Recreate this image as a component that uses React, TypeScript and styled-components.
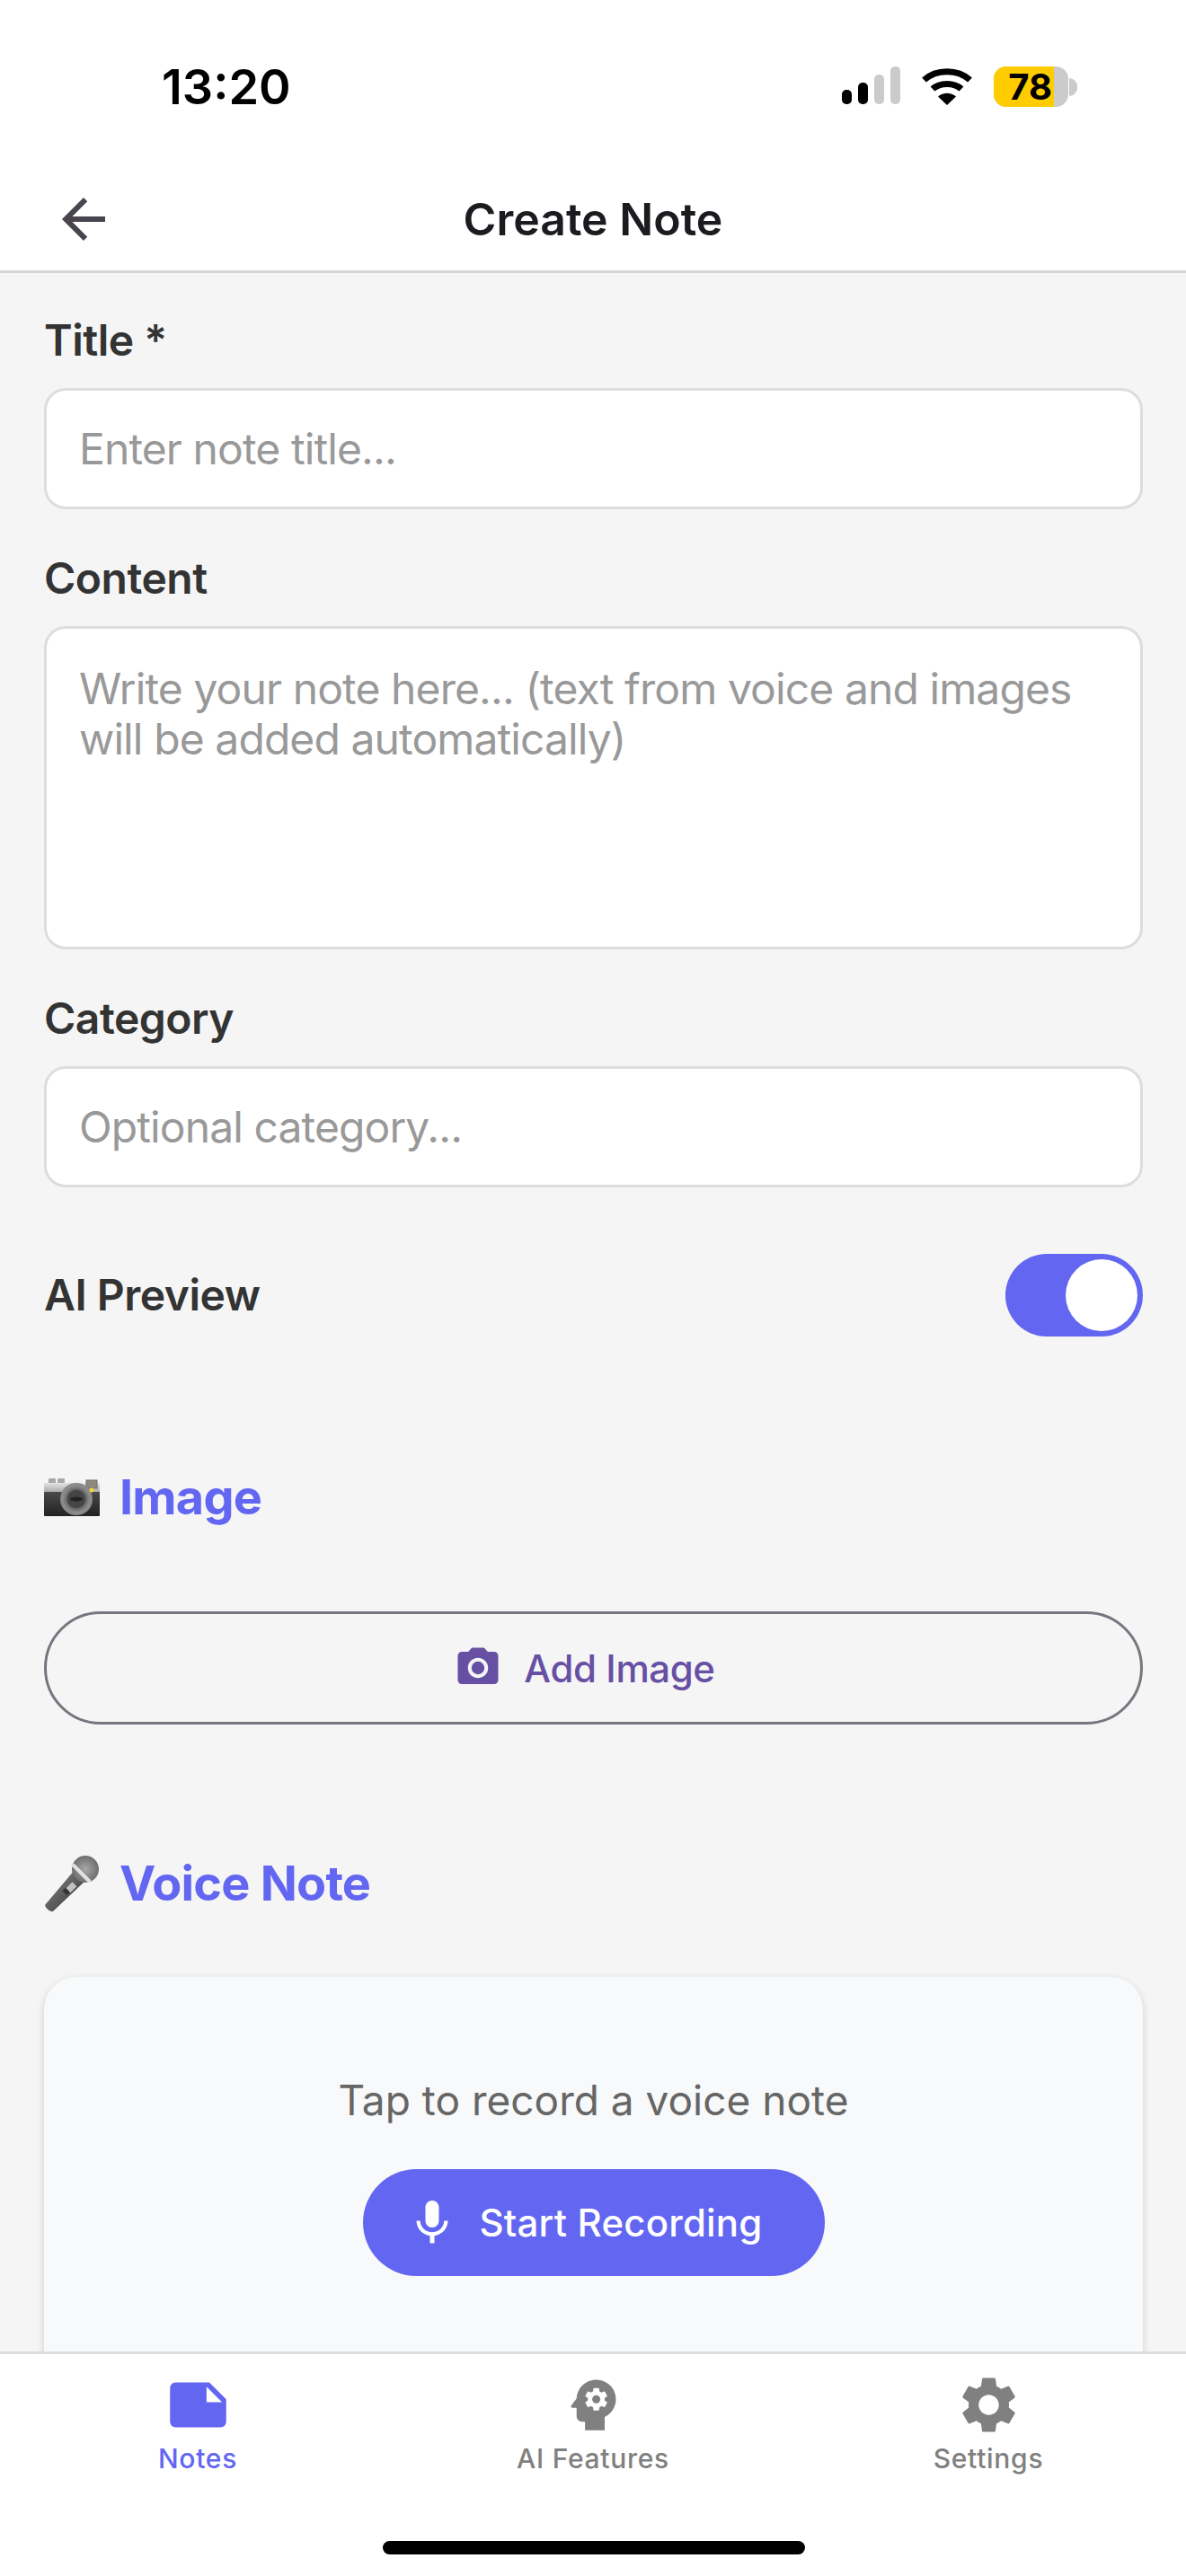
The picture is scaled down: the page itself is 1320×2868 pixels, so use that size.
import * as React from "react";
import styled, { createGlobalStyle } from "styled-components";
import { MdArrowBack, MdCameraAlt, MdMic, MdNote, MdPsychology, MdSettings } from "react-icons/md";

const GlobalStyle = createGlobalStyle`
  html, body { margin: 0; padding: 0; background: #fff; }
  * { box-sizing: border-box; }
  body { font-family: Inter, "Noto Sans", sans-serif; }
`;

const ACCENT = "#6366f1";

const Screen = styled.div`
  width: 1320px;
  height: 2868px;
  display: flex;
  flex-direction: column;
  overflow: hidden;
  background: #f5f5f5;
`;

const TopBar = styled.header`
  height: 304px;
  flex: none;
  display: flex;
  flex-direction: column;
  background: #fff;
  border-bottom: 3px solid #d4d4d6;
`;

const StatusBar = styled.div`
  height: 186px;
  flex: none;
  display: flex;
  align-items: flex-start;
  justify-content: space-between;
  padding: 64px 121px 0 180px;
`;

const Clock = styled.div`
  font-size: 54px;
  line-height: 66px;
  font-weight: 600;
  color: #000;
`;

const StatusIcons = styled.div`
  display: flex;
  align-items: flex-start;
  margin-top: 10px;
`;

const Battery = styled.div`
  display: flex;
  align-items: center;
  margin-left: 23px;
`;

const BatteryBody = styled.div`
  width: 83px;
  height: 45px;
  display: flex;
  border-radius: 14px;
  background: #cbcbcb;
`;

const BatteryFill = styled.div<{ $width: number }>`
  width: ${(p) => p.$width}px;
  display: flex;
  align-items: center;
  justify-content: flex-end;
  padding-right: 2px;
  border-radius: 14px 0 0 14px;
  background: #ffcc00;
  font-size: 40px;
  line-height: 45px;
  font-weight: 700;
  color: #000;
`;

const BatteryNub = styled.div`
  width: 9px;
  height: 20px;
  margin-left: 1px;
  border-radius: 0 10px 10px 0;
  background: #cbcbcb;
`;

const NavBar = styled.div`
  flex: 1;
  display: grid;
  grid-template-columns: 1fr auto 1fr;
  align-items: center;
  padding: 0 0 0 57px;
`;

const BackButton = styled.button`
  width: 72px;
  height: 72px;
  padding: 0;
  display: flex;
  align-items: center;
  border: 0;
  background: none;
  color: #49454f;
`;

const NavTitle = styled.h1`
  margin: 0 0 0 -57px;
  font-size: 50px;
  font-weight: 600;
  color: #1c1b1f;
  text-align: center;
`;

const Content = styled.main`
  flex: 1;
  min-height: 0;
  overflow: hidden;
  padding: 46px 48px 0 49px;
`;

const Field = styled.div`
  margin-bottom: 48px;
`;

const Label = styled.div`
  margin-bottom: 24px;
  font-size: 48px;
  line-height: 58px;
  font-weight: 600;
  letter-spacing: -0.5px;
  color: #333;
`;

const TextInput = styled.div<{ $multiline?: boolean }>`
  height: ${(p) => (p.$multiline ? 360 : 135)}px;
  padding: ${(p) => (p.$multiline ? "39px" : "0")} 36px 0;
  display: flex;
  align-items: ${(p) => (p.$multiline ? "flex-start" : "center")};
  border: 3px solid #ddd;
  border-radius: 24px;
  background: #fff;
  font-size: 48px;
  line-height: 56px;
  letter-spacing: -0.9px;
  color: #999;
`;

const SwitchRow = styled.div`
  display: flex;
  align-items: center;
  justify-content: space-between;
  margin-top: 74px;
`;

const SwitchLabel = styled(Label)`
  margin: 0;
`;

const Switch = styled.div`
  width: 153px;
  height: 92px;
  padding: 6px;
  display: flex;
  justify-content: flex-end;
  border-radius: 46px;
  background: ${ACCENT};
`;

const SwitchKnob = styled.div`
  width: 80px;
  height: 80px;
  border-radius: 50%;
  background: #fff;
`;

const SectionTitle = styled.h2<{ $top: number }>`
  margin: ${(p) => p.$top}px 0 0;
  display: flex;
  align-items: center;
  gap: 22px;
  font-size: 54px;
  line-height: 72px;
  font-weight: 700;
  letter-spacing: -0.8px;
  color: ${ACCENT};
`;

const OutlineButton = styled.button`
  width: 100%;
  height: 126px;
  margin-top: 91px;
  padding: 0 20px 0 0;
  display: flex;
  align-items: center;
  justify-content: center;
  gap: 24px;
  border: 3px solid #79747e;
  border-radius: 63px;
  background: none;
  font-family: inherit;
  font-size: 42px;
  font-weight: 500;
  letter-spacing: -0.4px;
  color: #6750a4;
`;

const RecorderCard = styled.section`
  height: 500px;
  margin-top: 68px;
  padding-top: 108px;
  display: flex;
  flex-direction: column;
  align-items: center;
  border-radius: 36px;
  background: #f8f9fa;
  box-shadow: 0 3px 9px rgba(0, 0, 0, 0.16);
`;

const RecorderHint = styled.p`
  margin: 0;
  font-size: 46px;
  line-height: 58px;
  color: #666;
`;

const RecordButton = styled.button`
  width: 514px;
  height: 119px;
  margin-top: 48px;
  padding: 0 21px 0 0;
  display: flex;
  align-items: center;
  justify-content: center;
  gap: 22px;
  border: 0;
  border-radius: 60px;
  background: ${ACCENT};
  font-family: inherit;
  font-size: 42px;
  font-weight: 500;
  letter-spacing: 0.2px;
  color: #fff;
`;

const TabBar = styled.nav`
  height: 250px;
  flex: none;
  position: relative;
  display: flex;
  align-items: flex-start;
  justify-content: space-around;
  padding: 19px 0 0;
  background: #fff;
  border-top: 3px solid #ddd;
`;

const Tab = styled.div<{ $active?: boolean }>`
  width: 440px;
  height: 130px;
  display: flex;
  flex-direction: column;
  align-items: center;
  color: ${(p) => (p.$active ? ACCENT : "#808080")};
`;

const TabLabel = styled.span`
  margin-top: 2px;
  font-size: 30px;
  line-height: 40px;
  font-weight: 500;
  letter-spacing: 0.7px;
`;

const HomeIndicator = styled.div`
  position: absolute;
  left: 426px;
  bottom: 24px;
  width: 470px;
  height: 15px;
  border-radius: 8px;
  background: #000;
`;

const SignalIcon = () => (
  <svg width="66" height="42" viewBox="0 0 66 42">
    <rect x="0" y="26" width="11" height="16" rx="5" fill="#000" />
    <rect x="18" y="18" width="11" height="24" rx="5" fill="#000" />
    <rect x="36" y="9" width="11" height="33" rx="5" fill="#cbcbcb" />
    <rect x="54" y="0" width="11" height="42" rx="5" fill="#cbcbcb" />
  </svg>
);

const WifiIcon = () => (
  <svg width="58" height="43" viewBox="0 0 58 43" style={{ marginLeft: 22 }}>
    <path d="M3.5 15C17 2.5 41 2.5 54.5 15" fill="none" stroke="#000" strokeWidth="7" />
    <path d="M13 25C21 17.500 37 17.500 45 25" fill="none" stroke="#000" strokeWidth="7" />
    <path d="M19 33.500C25 28.500 33 28.500 39 33.500L29 43Z" fill="#000" />
  </svg>
);

const CameraEmoji = () => (
  <svg width="62" height="42" viewBox="0 0 62 42">
    <defs>
      <linearGradient id="camTop" x1="0" y1="0" x2="0" y2="1">
        <stop offset="0" stopColor="#e4e4e4" />
        <stop offset="1" stopColor="#9a9a9a" />
      </linearGradient>
      <linearGradient id="camBody" x1="0" y1="0" x2="0" y2="1">
        <stop offset="0" stopColor="#4a4a4a" />
        <stop offset="1" stopColor="#222" />
      </linearGradient>
      <radialGradient id="camLens">
        <stop offset="0" stopColor="#3a3a3a" />
        <stop offset="0.65" stopColor="#5c5c5c" />
        <stop offset="1" stopColor="#8e8e8e" />
      </radialGradient>
    </defs>
    <rect x="5" y="0" width="8" height="6" rx="1" fill="#a8a8a8" />
    <rect x="15" y="0" width="8" height="6" rx="1" fill="#a8a8a8" />
    <rect x="26" y="2" width="17" height="5" rx="1" fill="#f1f1f1" />
    <rect x="0" y="5" width="62" height="13" rx="1" fill="url(#camTop)" />
    <rect x="47" y="2" width="12" height="9" fill="#8f887c" stroke="#6c6c6c" />
    <rect x="0" y="15" width="62" height="27" rx="1" fill="url(#camBody)" />
    <circle cx="36" cy="23" r="18" fill="#8a8a8a" />
    <circle cx="36" cy="23" r="15" fill="url(#camLens)" />
    <circle cx="36" cy="23" r="10" fill="#454545" />
    <ellipse cx="36" cy="23" rx="7" ry="2.500" fill="#222" />
    <circle cx="53" cy="13" r="2.500" fill="#f2d23c" />
  </svg>
);

const MicEmoji = () => (
  <svg width="62" height="63" viewBox="0 0 62 63">
    <defs>
      <linearGradient id="micBody" x1="0" y1="0" x2="1" y2="1">
        <stop offset="0" stopColor="#8a8a8a" />
        <stop offset="0.55" stopColor="#5a5a5a" />
        <stop offset="1" stopColor="#262626" />
      </linearGradient>
      <radialGradient id="micHead">
        <stop offset="0" stopColor="#a8a8a8" />
        <stop offset="1" stopColor="#6e6e6e" />
      </radialGradient>
    </defs>
    <path d="M34 16L46 28L10 62C7 63 2 59 1 55Z" fill="url(#micBody)" />
    <rect x="25" y="32" width="10" height="7" transform="rotate(-45 30 35)" fill="#c2c2c2" />
    <rect x="22" y="37" width="5" height="7" transform="rotate(-45 24 40)" fill="#333" />
    <circle cx="46" cy="15" r="15" fill="url(#micHead)" />
    <path d="M32 10L51 29" stroke="#e2e2e2" strokeWidth="4" />
  </svg>
);

const App = () => {
  return (
    <Screen>
      <GlobalStyle />
      <TopBar>
        <StatusBar>
          <Clock>13:20</Clock>
          <StatusIcons>
            <SignalIcon />
            <WifiIcon />
            <Battery>
              <BatteryBody>
                <BatteryFill $width={67}>78</BatteryFill>
              </BatteryBody>
              <BatteryNub />
            </Battery>
          </StatusIcons>
        </StatusBar>
        <NavBar>
          <BackButton>
            <MdArrowBack size={72} />
          </BackButton>
          <NavTitle>Create Note</NavTitle>
        </NavBar>
      </TopBar>

      <Content>
        <Field>
          <Label>Title *</Label>
          <TextInput>Enter note title...</TextInput>
        </Field>
        <Field>
          <Label>Content</Label>
          <TextInput $multiline>
            Write your note here... (text from voice and images will be added automatically)
          </TextInput>
        </Field>
        <Field>
          <Label>Category</Label>
          <TextInput>Optional category...</TextInput>
        </Field>

        <SwitchRow>
          <SwitchLabel>AI Preview</SwitchLabel>
          <Switch>
            <SwitchKnob />
          </Switch>
        </SwitchRow>

        <SectionTitle $top={143}>
          <CameraEmoji />
          Image
        </SectionTitle>
        <OutlineButton>
          <MdCameraAlt size={54} />
          Add Image
        </OutlineButton>

        <SectionTitle $top={141}>
          <MicEmoji />
          Voice Note
        </SectionTitle>
        <RecorderCard>
          <RecorderHint>Tap to record a voice note</RecorderHint>
          <RecordButton>
            <MdMic size={60} />
            Start Recording
          </RecordButton>
        </RecorderCard>
      </Content>

      <TabBar>
        <Tab $active>
          <MdNote size={75} />
          <TabLabel>Notes</TabLabel>
        </Tab>
        <Tab>
          <MdPsychology size={75} />
          <TabLabel>AI Features</TabLabel>
        </Tab>
        <Tab>
          <MdSettings size={75} />
          <TabLabel>Settings</TabLabel>
        </Tab>
        <HomeIndicator />
      </TabBar>
    </Screen>
  );
};

export default App;
